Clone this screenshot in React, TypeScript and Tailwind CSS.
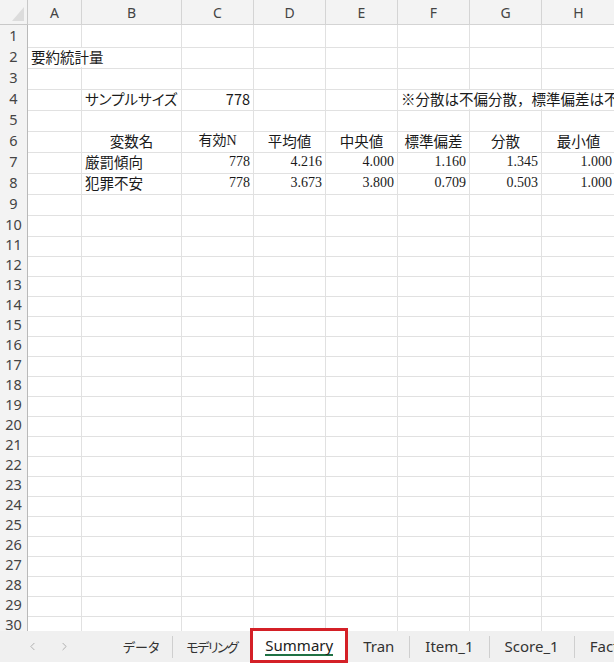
import React from 'react';
import { ChevronLeft, ChevronRight } from 'lucide-react';

type Cell = { t?: string; a?: 'l' | 'r' | 'c'; f?: 'jp' | 'num'; p?: boolean; span?: 2 | 3 };

const COLS = ['A', 'B', 'C', 'D', 'E', 'F', 'G', 'H'];

const blank = (n: number): Cell[] => Array.from({ length: n }, () => ({}));

// sheet contents by row number
const sheet: Record<number, Cell[]> = {
  2: [{ t: '要約統計量', span: 2 }, ...blank(6)],
  4: [
    {},
    { t: 'サンプルサイズ', p: true },
    { t: '778', a: 'r' },
    {},
    {},
    { t: '※分散は不偏分散，標準偏差は不偏分散の平方根', span: 3 },
  ],
  6: [
    {},
    { t: '変数名', a: 'c' },
    { t: '有効N', a: 'c', f: 'num' },
    { t: '平均値', a: 'c' },
    { t: '中央値', a: 'c' },
    { t: '標準偏差', a: 'c' },
    { t: '分散', a: 'c' },
    { t: '最小値', a: 'c' },
  ],
  7: [
    {},
    { t: '厳罰傾向' },
    { t: '778', a: 'r', f: 'num' },
    { t: '4.216', a: 'r', f: 'num' },
    { t: '4.000', a: 'r', f: 'num' },
    { t: '1.160', a: 'r', f: 'num' },
    { t: '1.345', a: 'r', f: 'num' },
    { t: '1.000', a: 'r', f: 'num' },
  ],
  8: [
    {},
    { t: '犯罪不安' },
    { t: '778', a: 'r', f: 'num' },
    { t: '3.673', a: 'r', f: 'num' },
    { t: '3.800', a: 'r', f: 'num' },
    { t: '0.709', a: 'r', f: 'num' },
    { t: '0.503', a: 'r', f: 'num' },
    { t: '1.000', a: 'r', f: 'num' },
  ],
};

const gridCols = 'grid grid-cols-[28px_54px_100px_72px_72px_72px_72px_72px_74px]';

const SheetCell: React.FC<{ cell: Cell }> = ({ cell }) => {
  const align =
    cell.a === 'r' ? 'justify-end' : cell.a === 'c' ? 'justify-center' : 'justify-start';
  const span = cell.span === 2 ? 'col-span-2' : cell.span === 3 ? 'col-span-3' : '';
  const font =
    cell.f === 'num'
      ? "font-['Liberation_Serif','Noto_Sans_CJK_JP',serif] text-[14px]"
      : "font-['Noto_Sans_CJK_JP',sans-serif] text-[14.5px]";
  const palt = cell.p ? "[font-feature-settings:'palt']" : '';
  return (
    <div
      className={`flex items-center overflow-hidden whitespace-nowrap border-r border-b border-[#e1e1e1] px-[3px] text-[#1a1a1a] ${align} ${span} ${font} ${palt}`}
    >
      {cell.t}
    </div>
  );
};

const Tab: React.FC<{ label: string; jp?: boolean; className?: string }> = ({ label, jp, className = '' }) => (
  <div
    className={`flex shrink-0 items-center whitespace-nowrap text-[#333] ${
      jp
        ? "px-[13px] font-['Noto_Sans_CJK_JP',sans-serif] text-[13px] [font-feature-settings:'palt']"
        : "px-[15px] font-['Noto_Sans',sans-serif] text-[15px]"
    } ${className}`}
  >
    {label}
  </div>
);

const Sep = () => <div className="h-[22px] w-px shrink-0 self-center bg-[#cfcfcf]" />;

export default function App() {
  const rows = Array.from({ length: 30 }, (_, i) => i + 1);

  return (
    <div className="flex h-[665px] w-[614px] flex-col overflow-hidden bg-white">
      <div className="h-[631px] shrink-0 overflow-hidden">
        {/* column headers */}
        <div className={`${gridCols} h-[25px]`}>
          <div className="flex items-end justify-end border-r border-b border-[#c8c8c8] bg-[#f3f3f3] pr-[3px] pb-[3px]">
            <svg width="12" height="14" viewBox="0 0 12 14">
              <polygon points="0,14 12,14 12,0" fill="#dcdcdc" />
            </svg>
          </div>
          {COLS.map(c => (
            <div
              key={c}
              className="flex items-center justify-center border-r border-b border-[#d4d4d4] bg-[#f3f3f3] font-['Noto_Sans',sans-serif] text-[14px] text-[#444]"
            >
              {c}
            </div>
          ))}
        </div>

        {rows.map(r => (
          <div key={r} className={`${gridCols} ${r <= 9 ? 'h-[21px]' : 'h-[20px]'}`}>
            <div className="flex items-center justify-center border-r border-b border-r-[#b9b9b9] border-b-[#dedede] bg-[#f3f3f3] font-['Noto_Sans',sans-serif] text-[14.5px] text-[#444]">
              {r}
            </div>
            {(sheet[r] ?? blank(8)).map((cell, i) => (
              <SheetCell key={i} cell={cell} />
            ))}
          </div>
        ))}
      </div>

      {/* sheet tabs */}
      <div className="relative z-10 flex h-[31px] shrink-0 items-stretch overflow-x-clip bg-[#f0f0f0]">
        <div className="flex w-[110px] shrink-0 items-center gap-[19px] pl-[26px] text-[#a0a0a0]">
          <ChevronLeft size={13} strokeWidth={1.5} />
          <ChevronRight size={13} strokeWidth={1.5} />
        </div>
        <Tab label="データ" jp />
        <Sep />
        <Tab label="モデリング" jp className="tracking-[-1.5px]" />
        <div className="-mt-[3px] flex h-[35px] shrink-0 items-center border-[3px] border-[#d42027] bg-white px-[12px]">
          <span className="border-b-2 border-[#1f7244] pt-[1px] font-['Noto_Sans',sans-serif] text-[15px] leading-[18px] text-[#222]">
            Summary
          </span>
        </div>
        <Tab label="Tran" />
        <Sep />
        <Tab label="Item_1" />
        <Sep />
        <Tab label="Score_1" />
        <Sep />
        <Tab label="Factor_1" />
      </div>
      <div className="h-[3px] bg-white" />
    </div>
  );
}
